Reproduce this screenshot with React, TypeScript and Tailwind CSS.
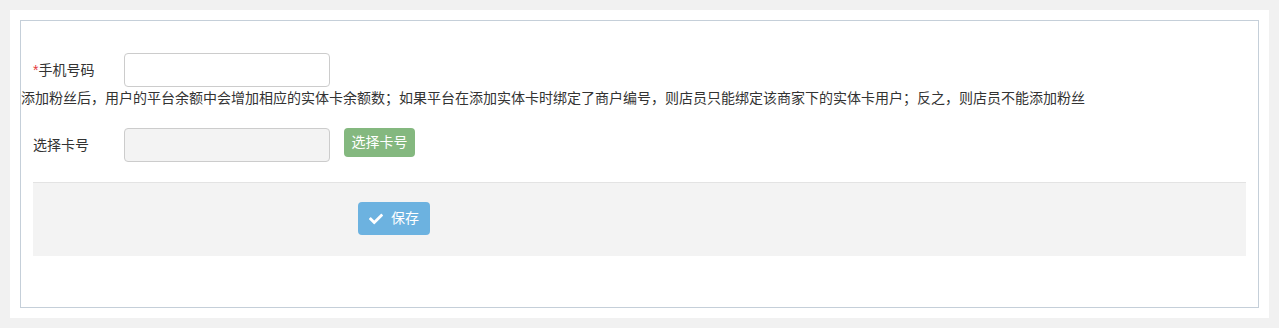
import React from 'react';

const font = { fontFamily: '"Liberation Sans", "Noto Sans CJK SC", sans-serif' };

function CheckIcon() {
  return (
    <svg viewBox="0 0 512 512" className="w-[14px] h-[14px]" fill="currentColor">
      <path d="M173.898 439.404l-166.4-166.4c-9.997-9.997-9.997-26.206 0-36.204l36.203-36.204c9.997-9.998 26.207-9.998 36.204 0L192 312.69 432.095 72.596c9.997-9.997 26.207-9.997 36.204 0l36.203 36.204c9.997 9.997 9.997 26.206 0 36.204l-294.4 294.401c-9.998 9.997-26.207 9.997-36.204-.001z" />
    </svg>
  );
}

export default function App() {
  return (
    <div className="bg-[#f1f1f1] p-[10px] h-[328px]" style={font}>
      <div className="bg-white p-[10px]">
        <div className="border border-[#c5cfd9] h-[288px] pt-[32px] text-[14px] text-[#333]">
          <div className="flex items-center pl-[12px]">
            <label className="w-[91px]">
              <span className="text-[#e4393c]">*</span>手机号码
            </label>
            <input
              type="text"
              className="w-[206px] h-[34px] border border-[#ccc] rounded-[4px] bg-white outline-none px-2"
            />
          </div>
          <p className="leading-[20px] mt-[1px]">
            添加粉丝后，用户的平台余额中会增加相应的实体卡余额数；如果平台在添加实体卡时绑定了商户编号，则店员只能绑定该商家下的实体卡用户；反之，则店员不能添加粉丝
          </p>
          <div className="flex items-center pl-[12px] mt-[20px]">
            <label className="w-[91px]">选择卡号</label>
            <input
              type="text"
              disabled
              className="w-[206px] h-[34px] border border-[#ccc] rounded-[4px] bg-[#f3f3f3] outline-none px-2"
            />
            <button className="ml-[14px] h-[29px] w-[71px] rounded-[4px] bg-[#84b87f] text-white self-start">
              选择卡号
            </button>
          </div>
          <div className="mx-[12px] mt-[20px] border-t border-[#e3e3e3] bg-[#f3f3f3] h-[74px] pt-[19px] pl-[325px]">
            <button className="flex items-center justify-center gap-[8px] h-[33px] w-[72px] rounded-[4px] bg-[#6cb2e0] text-white">
              <CheckIcon />
              保存
            </button>
          </div>
        </div>
      </div>
    </div>
  );
}
